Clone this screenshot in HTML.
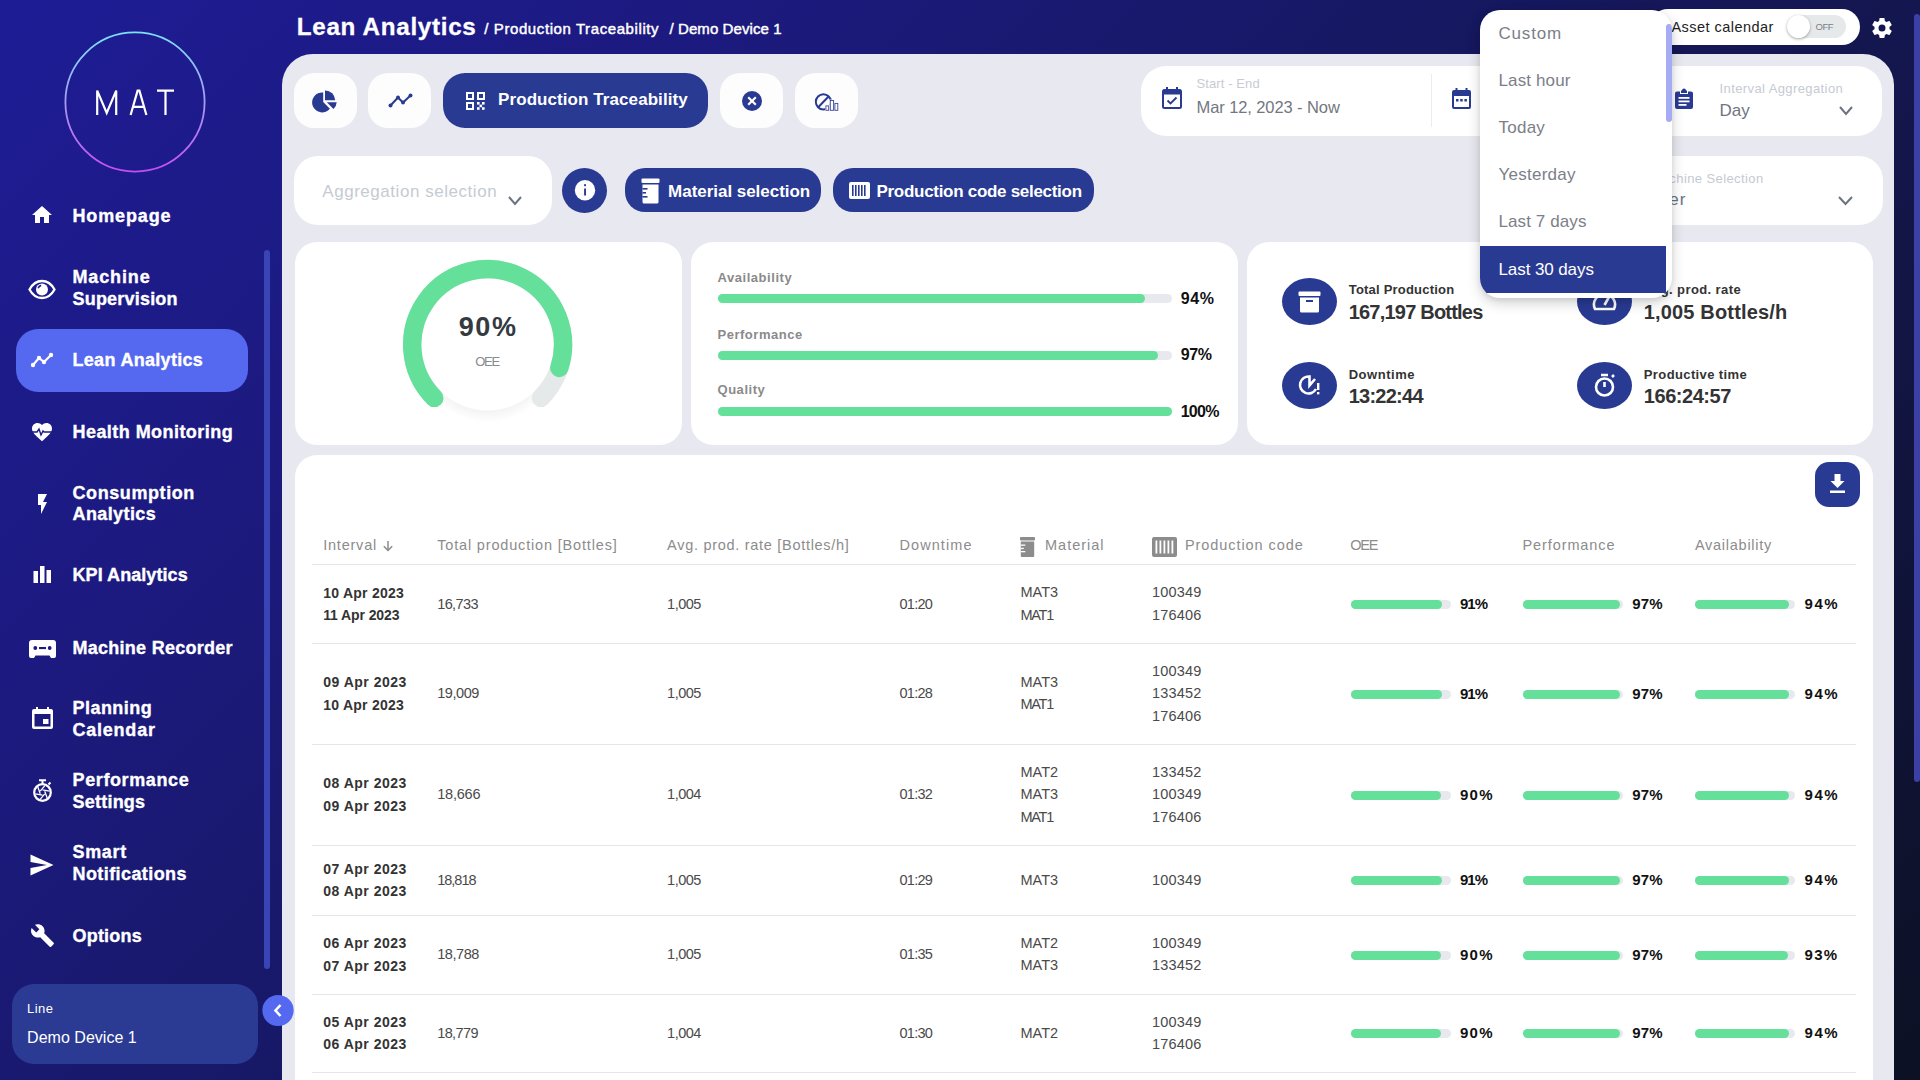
<!DOCTYPE html>
<html><head><meta charset="utf-8">
<style>
*{margin:0;padding:0;box-sizing:border-box}
html,body{width:1920px;height:1080px;overflow:hidden}
body{position:relative;font-family:"Liberation Sans",sans-serif;background:linear-gradient(135deg,#1e1c95 0%,#1c1a7e 25%,#161862 48%,#131544 74%,#0c1124 100%)}
.a{position:absolute}
.t{position:absolute;white-space:nowrap}
svg{position:absolute;overflow:visible}
</style></head><body>

<svg style="left:64px;top:31px" width="142" height="142" viewBox="0 0 142 142">
<defs><linearGradient id="lg" x1="0" y1="0" x2="0" y2="1"><stop offset="0" stop-color="#7fe0fa"/><stop offset="0.5" stop-color="#a79cf4"/><stop offset="1" stop-color="#c84cf2"/></linearGradient></defs>
<circle cx="71" cy="71" r="69.6" fill="none" stroke="url(#lg)" stroke-width="1.8"/>
</svg>
<svg style="left:0;top:0" width="282" height="200" viewBox="0 0 282 200">
<g fill="none" stroke="#fff" stroke-width="2.2" stroke-linejoin="miter">
<path d="M97.2,115 V90.6 L106.7,113 L116.2,90.6 V115"/>
<path d="M130.6,115 L137.6,90.6 H139.4 L146.4,115 M133.4,106.8 H143.6"/>
<path d="M157,90.6 H174 M165.5,90.6 V115"/>
</g></svg>
<div class="a" style="left:16px;top:329px;width:232px;height:63px;background:#5468f0;border-radius:22px;"></div>
<div class="t" id="t1" style="left:72.5px;top:206.9px;font-size:18px;line-height:18px;color:#fff;font-weight:bold;letter-spacing:0.857px;-webkit-text-stroke:0.35px #fff;">Homepage</div>
<div class="t" id="t2" style="left:72.5px;top:267.9px;font-size:18px;line-height:18px;color:#fff;font-weight:bold;letter-spacing:0.866px;-webkit-text-stroke:0.35px #fff;">Machine</div>
<div class="t" id="t3" style="left:72.5px;top:289.8px;font-size:18px;line-height:18px;color:#fff;font-weight:bold;letter-spacing:0.200px;-webkit-text-stroke:0.35px #fff;">Supervision</div>
<div class="t" id="t4" style="left:72.5px;top:350.7px;font-size:18px;line-height:18px;color:#fff;font-weight:bold;letter-spacing:0.308px;-webkit-text-stroke:0.35px #fff;">Lean Analytics</div>
<div class="t" id="t5" style="left:72.5px;top:422.6px;font-size:18px;line-height:18px;color:#fff;font-weight:bold;letter-spacing:0.448px;-webkit-text-stroke:0.35px #fff;">Health Monitoring</div>
<div class="t" id="t6" style="left:72.5px;top:483.5px;font-size:18px;line-height:18px;color:#fff;font-weight:bold;letter-spacing:0.580px;-webkit-text-stroke:0.35px #fff;">Consumption</div>
<div class="t" id="t7" style="left:72.5px;top:505.2px;font-size:18px;line-height:18px;color:#fff;font-weight:bold;letter-spacing:0.397px;-webkit-text-stroke:0.35px #fff;">Analytics</div>
<div class="t" id="t8" style="left:72.5px;top:566.3px;font-size:18px;line-height:18px;color:#fff;font-weight:bold;letter-spacing:0.066px;-webkit-text-stroke:0.35px #fff;">KPI Analytics</div>
<div class="t" id="t9" style="left:72.5px;top:638.5px;font-size:18px;line-height:18px;color:#fff;font-weight:bold;letter-spacing:0.267px;-webkit-text-stroke:0.35px #fff;">Machine Recorder</div>
<div class="t" id="t10" style="left:72.5px;top:699.4px;font-size:18px;line-height:18px;color:#fff;font-weight:bold;letter-spacing:0.457px;-webkit-text-stroke:0.35px #fff;">Planning</div>
<div class="t" id="t11" style="left:72.5px;top:721.1px;font-size:18px;line-height:18px;color:#fff;font-weight:bold;letter-spacing:0.770px;-webkit-text-stroke:0.35px #fff;">Calendar</div>
<div class="t" id="t12" style="left:72.5px;top:771.1px;font-size:18px;line-height:18px;color:#fff;font-weight:bold;letter-spacing:0.620px;-webkit-text-stroke:0.35px #fff;">Performance</div>
<div class="t" id="t13" style="left:72.5px;top:792.9px;font-size:18px;line-height:18px;color:#fff;font-weight:bold;letter-spacing:0.229px;-webkit-text-stroke:0.35px #fff;">Settings</div>
<div class="t" id="t14" style="left:72.5px;top:842.9px;font-size:18px;line-height:18px;color:#fff;font-weight:bold;letter-spacing:0.650px;-webkit-text-stroke:0.35px #fff;">Smart</div>
<div class="t" id="t15" style="left:72.5px;top:864.6px;font-size:18px;line-height:18px;color:#fff;font-weight:bold;letter-spacing:0.416px;-webkit-text-stroke:0.35px #fff;">Notifications</div>
<div class="t" id="t16" style="left:72.5px;top:926.7px;font-size:18px;line-height:18px;color:#fff;font-weight:bold;letter-spacing:0.200px;-webkit-text-stroke:0.35px #fff;">Options</div>
<svg style="left:30px;top:203px" width="24" height="24" viewBox="0 0 24 24"><path fill="#fff" d="M10,20V14H14V20H19V12H22L12,3L2,12H5V20H10Z"/></svg>
<svg style="left:28px;top:279px" width="28" height="21" viewBox="0 0 28 21"><path d="M1.5,10.5C4.5,5 9,2 14,2C19,2 23.5,5 26.5,10.5C23.5,16 19,19 14,19C9,19 4.5,16 1.5,10.5Z" fill="none" stroke="#fff" stroke-width="2.3"/><circle cx="14" cy="10.5" r="6" fill="#fff"/><path d="M10.2,9.3A4,4 0 0,1 13.2,6.4" fill="none" stroke="#1d1b8a" stroke-width="1.6"/></svg>
<svg style="left:30px;top:350px" width="24" height="18" viewBox="0 0 24 18"><polyline points="3,15 9,8 14,12 21,5" fill="none" stroke="#fff" stroke-width="2.2"/><g fill="#fff"><circle cx="3" cy="15" r="2.2"/><circle cx="9" cy="8" r="2.2"/><circle cx="14" cy="12" r="2.2"/><circle cx="21" cy="5" r="2.2"/></g></svg>
<svg style="left:30px;top:420px" width="24" height="24" viewBox="0 0 24 24"><path fill="#fff" d="M12,21.35L10.55,20.03C5.4,15.36 2,12.27 2,8.5C2,5.41 4.42,3 7.5,3C9.24,3 10.91,3.81 12,5.08C13.09,3.81 14.76,3 16.5,3C19.58,3 22,5.41 22,8.5C22,12.27 18.6,15.36 13.45,20.03L12,21.35Z"/><polyline points="1,12 7,12 9,9 11,15 13,11 14,12 23,12" fill="none" stroke="#1d1b88" stroke-width="1.4"/></svg>
<svg style="left:30px;top:492px" width="24" height="24" viewBox="0 0 24 24"><path fill="#fff" d="M8,2V13H11V22L17,10H13L17,2H8Z"/></svg>
<svg style="left:33px;top:566px" width="19" height="17" viewBox="0 0 19 17"><g fill="#fff"><rect x="0.5" y="5" width="4.5" height="12"/><rect x="7" y="0" width="4.5" height="17"/><rect x="13.5" y="4" width="4.5" height="13"/></g></svg>
<svg style="left:29px;top:640px" width="27" height="18" viewBox="0 0 27 18"><path fill="#fff" d="M3,0H24A3,3 0 0,1 27,3V16A2,2 0 0,1 25,18H22L20.5,15.5H6.5L5,18H2A2,2 0 0,1 0,16V3A3,3 0 0,1 3,0Z"/><g fill="#1c1a80"><circle cx="6.3" cy="8" r="1.9"/><circle cx="20.7" cy="8" r="1.9"/><rect x="10" y="7" width="7" height="2.1"/></g></svg>
<svg style="left:32px;top:707px" width="21" height="22" viewBox="0 0 21 22"><path fill="#fff" d="M4,0H6V2H15V0H17V2H19A2,2 0 0,1 21,4V20A2,2 0 0,1 19,22H2A2,2 0 0,1 0,20V4A2,2 0 0,1 2,2H4ZM2.5,7V19.5H18.5V7Z"/><rect fill="#fff" x="11" y="12" width="5.5" height="5"/></svg>
<svg style="left:32px;top:779px" width="22" height="23" viewBox="0 0 22 23"><g fill="none" stroke="#fff"><circle cx="10.5" cy="13.5" r="8.3" stroke-width="2.2"/><path d="M10.50,10.90L17.57,12.15M12.75,12.20L15.21,18.95M12.75,14.80L8.14,20.30M10.50,16.10L3.43,14.85M8.25,14.80L5.79,8.05M8.25,12.20L12.86,6.70" stroke-width="1.3"/><path d="M7,1.2H14M10.5,1.5V5M16.5,5.5L18.5,3.5" stroke-width="2"/></g></svg>
<svg style="left:30px;top:854px" width="24" height="22" viewBox="0 0 24 22"><path fill="#fff" d="M0.5,21.5L23.5,11L0.5,0.5V8L17,11L0.5,14Z"/></svg>
<svg style="left:30px;top:923px" width="25" height="25" viewBox="0 0 24 24"><path fill="#fff" d="M22.7,19L13.6,9.9C14.5,7.6 14,4.9 12.1,3C10.1,1 7.1,0.6 4.7,1.7L9,6L6,9L1.6,4.7C0.4,7.1 0.9,10.1 2.9,12.1C4.8,14 7.5,14.5 9.8,13.6L18.9,22.7C19.3,23.1 19.9,23.1 20.3,22.7L22.6,20.4C23.1,20 23.1,19.3 22.7,19Z"/></svg>
<div class="a" style="left:264px;top:250px;width:6px;height:719px;background:#3944b5;border-radius:3px;"></div>
<div class="a" style="left:12px;top:984px;width:246px;height:80px;background:#2b3a93;border-radius:22px;"></div>
<div class="t" id="t17" style="left:27.1px;top:1002.2px;font-size:13px;line-height:13px;color:#fff;font-weight:normal;letter-spacing:0.399px;">Line</div>
<div class="t" id="t18" style="left:27.1px;top:1029.6px;font-size:16px;line-height:16px;color:#fff;font-weight:normal;letter-spacing:0.018px;">Demo Device 1</div>
<div class="t" id="t19" style="left:296.8px;top:14.5px;font-size:24.2px;line-height:24.2px;color:#fff;font-weight:bold;letter-spacing:0.708px;-webkit-text-stroke:0.3px #fff;">Lean Analytics</div>
<div class="t" id="t20" style="left:484.3px;top:20.5px;font-size:15px;line-height:15px;color:#fff;font-weight:normal;letter-spacing:0.591px;-webkit-text-stroke:0.45px #fff;">/ Production Traceability</div>
<div class="t" id="t21" style="left:669.5px;top:20.5px;font-size:15px;line-height:15px;color:#fff;font-weight:normal;letter-spacing:0.087px;-webkit-text-stroke:0.45px #fff;">/ Demo Device 1</div>
<div class="a" style="left:1650px;top:9px;width:210px;height:36px;background:#fff;border-radius:18px;"></div>
<div class="t" id="t22" style="left:1671.5px;top:19.9px;font-size:14.5px;line-height:14.5px;color:#222;font-weight:normal;letter-spacing:0.45px">Asset calendar</div>
<div class="a" style="left:1787px;top:15px;width:59px;height:23px;background:#e6e9ea;border-radius:12px;"></div>
<div class="a" style="left:1787px;top:15px;width:23px;height:23px;background:#fff;border-radius:50%;box-shadow:0 1px 3px rgba(0,0,0,.35);"></div>
<div class="t" id="t23" style="left:1815.5px;top:22.2px;font-size:9.5px;line-height:9.5px;color:#7a7f85;font-weight:normal;letter-spacing:-0.500px;">OFF</div>
<svg style="left:1870px;top:16px" width="24" height="24" viewBox="0 0 24 24"><path fill="#fff" d="M12,15.5A3.5,3.5 0 0,1 8.5,12A3.5,3.5 0 0,1 12,8.5A3.5,3.5 0 0,1 15.5,12A3.5,3.5 0 0,1 12,15.5M19.43,12.97C19.47,12.65 19.5,12.33 19.5,12C19.5,11.67 19.47,11.34 19.43,11L21.54,9.37C21.73,9.22 21.78,8.95 21.66,8.73L19.66,5.27C19.54,5.05 19.27,4.96 19.05,5.05L16.56,6.05C16.04,5.66 15.5,5.32 14.87,5.07L14.5,2.42C14.46,2.18 14.25,2 14,2H10C9.75,2 9.54,2.18 9.5,2.42L9.13,5.07C8.5,5.32 7.96,5.66 7.44,6.05L4.95,5.05C4.73,4.96 4.46,5.05 4.34,5.27L2.34,8.73C2.21,8.95 2.27,9.22 2.46,9.370L4.57,11C4.53,11.34 4.5,11.67 4.5,12C4.5,12.33 4.53,12.65 4.57,12.97L2.46,14.63C2.27,14.78 2.21,15.05 2.34,15.27L4.34,18.73C4.46,18.95 4.73,19.03 4.95,18.95L7.44,17.94C7.96,18.34 8.5,18.68 9.130,18.93L9.5,21.58C9.54,21.82 9.75,22 10,22H14C14.25,22 14.46,21.82 14.5,21.58L14.87,18.93C15.5,18.67 16.04,18.34 16.56,17.94L19.05,18.95C19.27,19.03 19.54,18.95 19.66,18.73L21.66,15.27C21.78,15.05 21.73,14.78 21.54,14.63L19.43,12.97Z"/></svg>
<div class="a" style="left:1914px;top:14px;width:6px;height:768px;background:#3a40a6;border-radius:3px;"></div>
<div class="a" style="left:282px;top:54px;width:1612px;height:1100px;background:#e8e8f0;border-radius:31px 31px 0 0;"></div>
<div class="a" style="left:294px;top:73px;width:63px;height:55px;background:#fdfdfe;border-radius:20px;"></div>
<div class="a" style="left:368px;top:73px;width:63px;height:55px;background:#fdfdfe;border-radius:20px;"></div>
<div class="a" style="left:720px;top:73px;width:63px;height:55px;background:#fdfdfe;border-radius:20px;"></div>
<div class="a" style="left:795px;top:73px;width:63px;height:55px;background:#fdfdfe;border-radius:20px;"></div>
<div class="a" style="left:443px;top:73px;width:265px;height:55px;background:#293a92;border-radius:22px;"></div>
<svg style="left:313px;top:89px" width="25" height="24" viewBox="0 0 25 24"><g fill="#293a92"><path d="M10.2,3.5V13L16.9,19.7A10,10 0 1,1 10.2,3.5Z"/><path d="M12,1.5A10,10 0 0,1 22.2,11.3H12Z"/><path d="M13.8,13.3H23.7A10,10 0 0,1 20.5,20Z"/></g></svg>
<svg style="left:388px;top:93px" width="25" height="15" viewBox="0 0 25 15"><polyline points="2.5,12.5 10,4.5 15,9.5 22.5,2.5" fill="none" stroke="#293a92" stroke-width="2"/><g fill="#293a92"><circle cx="2.5" cy="12.5" r="2"/><circle cx="10" cy="4.5" r="2"/><circle cx="15" cy="9.5" r="2"/><circle cx="22.5" cy="2.5" r="2"/></g></svg>
<svg style="left:466px;top:92px" width="19" height="18" viewBox="0 0 19 18"><g fill="none" stroke="#fff" stroke-width="2"><rect x="1" y="1" width="6" height="6"/><rect x="12" y="1" width="6" height="6"/><rect x="1" y="11" width="6" height="6"/></g><g fill="#fff"><rect x="11" y="10" width="2.6" height="2.6"/><rect x="16" y="10" width="2.6" height="2.6"/><rect x="13.5" y="12.6" width="2.6" height="2.6"/><rect x="11" y="15.2" width="2.6" height="2.6"/><rect x="16" y="15.2" width="2.6" height="2.6"/></g></svg>
<div class="t" id="t24" style="left:498.1px;top:91.3px;font-size:17px;line-height:17px;color:#fff;font-weight:bold;letter-spacing:0.073px;">Production Traceability</div>
<svg style="left:742px;top:91px" width="20" height="20" viewBox="0 0 20 20"><circle cx="10" cy="10" r="10" fill="#293a92"/><path d="M6.2,6.2L13.8,13.8M13.8,6.2L6.2,13.8" stroke="#fff" stroke-width="2.2"/></svg>
<svg style="left:815px;top:92px" width="24" height="19" viewBox="0 0 24 19"><g fill="none" stroke="#293a92" stroke-width="2"><circle cx="8.4" cy="9.8" r="7.6"/><path d="M3.2,15.2L13.8,4.2"/></g><path d="M10,13H14.4V7.6H19.6V10.6H23.6V19H10Z" fill="#fdfdfe"/><g fill="none" stroke="#3a4698" stroke-width="0.9"><rect x="10.9" y="13.9" width="2.8" height="4.4"/><rect x="15.3" y="8.5" width="3.3" height="9.8"/><rect x="19.9" y="11.4" width="2.9" height="6.9"/></g></svg>
<div class="a" style="left:1141px;top:66px;width:741px;height:70px;background:#fff;border-radius:25px;"></div>
<div class="a" style="left:1431px;top:74px;width:1px;height:53px;background:#ececf0;border-radius:0;"></div>
<svg style="left:1162px;top:87px" width="20" height="22" viewBox="0 0 20 22"><path fill="#293a92" d="M4,0H6V2H14V0H16V2H17.5A2.5,2.5 0 0,1 20,4.5V19.5A2.5,2.5 0 0,1 17.5,22H2.5A2.5,2.5 0 0,1 0,19.5V4.5A2.5,2.5 0 0,1 2.5,2H4ZM2,7.5V20H18V7.5Z"/><polyline points="5.5,13.5 8.5,16.5 14.5,10.5" fill="none" stroke="#293a92" stroke-width="1.8"/></svg>
<div class="t" id="t25" style="left:1196.5px;top:77.4px;font-size:13px;line-height:13px;color:#c8ccd2;font-weight:normal;letter-spacing:0.100px;">Start - End</div>
<div class="t" id="t26" style="left:1196.5px;top:99.1px;font-size:16.5px;line-height:16.5px;color:#737780;font-weight:normal;letter-spacing:-0.092px;">Mar 12, 2023 - Now</div>
<svg style="left:1452px;top:88px" width="19" height="21" viewBox="0 0 19 21"><path fill="#293a92" d="M3.5,0H5.5V2H13.5V0H15.5V2H17A2,2 0 0,1 19,4V19A2,2 0 0,1 17,21H2A2,2 0 0,1 0,19V4A2,2 0 0,1 2,2H3.5ZM2,8V19H17V8Z"/><g fill="#293a92"><rect x="4" y="11" width="2.5" height="2.5"/><rect x="8.2" y="11" width="2.5" height="2.5"/><rect x="12.4" y="11" width="2.5" height="2.5"/></g></svg>
<svg style="left:1675px;top:88px" width="18" height="21" viewBox="0 0 18 21"><path fill="#293a92" d="M6,2.5H7A2,2 0 0,1 11,2.5H12V5H6ZM2,3.5H5V6H13V3.5H16A2,2 0 0,1 18,5.5V19A2,2 0 0,1 16,21H2A2,2 0 0,1 0,19V5.5A2,2 0 0,1 2,3.5Z"/><g fill="#fff"><rect x="3.5" y="9" width="11" height="1.8"/><rect x="3.5" y="12.5" width="11" height="1.8"/><rect x="3.5" y="16" width="8" height="1.8"/></g></svg>
<div class="t" id="t27" style="left:1719.5px;top:82.0px;font-size:13px;line-height:13px;color:#c5cad3;font-weight:normal;letter-spacing:0.401px;">Interval Aggregation</div>
<div class="t" id="t28" style="left:1719.5px;top:102.1px;font-size:17px;line-height:17px;color:#707580;font-weight:normal;">Day</div>
<svg style="left:1838.5px;top:106px" width="14" height="9" viewBox="0 0 14 9"><polyline points="1,1 7.0,8 13,1" fill="none" stroke="#6b7280" stroke-width="2"/></svg>
<div class="a" style="left:294px;top:156px;width:258px;height:69px;background:#fff;border-radius:24px;"></div>
<div class="t" id="t29" style="left:322.3px;top:183.0px;font-size:17px;line-height:17px;color:#c5cbd2;font-weight:normal;letter-spacing:0.540px;">Aggregation selection</div>
<svg style="left:508px;top:196px" width="14" height="9" viewBox="0 0 14 9"><polyline points="1,1 7.0,8 13,1" fill="none" stroke="#6b7280" stroke-width="2"/></svg>
<svg style="left:562px;top:168px" width="45" height="45" viewBox="0 0 45 45"><circle cx="22.5" cy="22.5" r="22.5" fill="#293a92"/><circle cx="23" cy="22.3" r="10.2" fill="#fff"/><rect x="22.1" y="20.5" width="1.9" height="7" fill="#293a92"/><rect x="22.1" y="16.2" width="1.9" height="2" fill="#293a92"/></svg>
<div class="a" style="left:625px;top:168px;width:196px;height:44px;background:#293a92;border-radius:20px;"></div>
<div class="a" style="left:833px;top:168px;width:261px;height:44px;background:#293a92;border-radius:20px;"></div>
<svg style="left:641px;top:178px" width="19" height="26" viewBox="0 0 19 26"><g fill="#fff"><rect x="0.5" y="0.5" width="18" height="4.5" rx="1"/><path d="M1.5,6.5H17.5V24A1.5,1.5 0 0,1 16,25.5H3A1.5,1.5 0 0,1 1.5,24Z"/></g><g fill="#293a92"><rect x="1.5" y="10" width="5" height="1.6"/><rect x="1.5" y="14" width="3.5" height="1.6"/><rect x="1.5" y="18" width="5" height="1.6"/></g></svg>
<div class="t" id="t30" style="left:668.1px;top:182.5px;font-size:17px;line-height:17px;color:#fff;font-weight:bold;letter-spacing:-0.033px;">Material selection</div>
<svg style="left:849px;top:182px" width="21" height="17" viewBox="0 0 21 17"><rect width="21" height="17" rx="2" fill="#fff"/><g fill="#293a92"><rect x="3" y="3" width="1.6" height="11"/><rect x="6" y="3" width="1.6" height="11"/><rect x="9" y="3" width="1.6" height="11"/><rect x="12" y="3" width="1.6" height="11"/><rect x="15" y="3" width="1.6" height="11"/></g></svg>
<div class="t" id="t31" style="left:876.5px;top:182.5px;font-size:17px;line-height:17px;color:#fff;font-weight:bold;letter-spacing:-0.292px;">Production code selection</div>
<div class="a" style="left:1560px;top:156px;width:323px;height:69px;background:#fff;border-radius:24px;"></div>
<div class="t" id="t32" style="left:1650.5px;top:172.3px;font-size:13px;line-height:13px;color:#c5cad3;font-weight:normal;letter-spacing:0.4px">Machine Selection</div>
<div class="t" id="t33" style="left:1643.5px;top:190.6px;font-size:17px;line-height:17px;color:#6b7280;font-weight:normal;letter-spacing:1px">Filler</div>
<svg style="left:1838px;top:196px" width="15" height="9" viewBox="0 0 15 9"><polyline points="1,1 7.5,8 14,1" fill="none" stroke="#6b7280" stroke-width="2"/></svg>
<div class="a" style="left:295px;top:242px;width:387px;height:203px;background:#fff;border-radius:22px;"></div>
<div class="a" style="left:691px;top:242px;width:547px;height:203px;background:#fff;border-radius:22px;"></div>
<div class="a" style="left:1247px;top:242px;width:626px;height:203px;background:#fff;border-radius:22px;"></div>
<svg style="left:295px;top:242px" width="387" height="203" viewBox="0 0 387 203">
<defs><radialGradient id="sh" cx="0.5" cy="0.5" r="0.5"><stop offset="0.82" stop-color="#000" stop-opacity="0.05"/><stop offset="1" stop-color="#000" stop-opacity="0"/></radialGradient></defs>
<circle cx="192.60000000000002" cy="108.60000000000002" r="72" fill="url(#sh)"/>
<circle cx="192.60000000000002" cy="102.60000000000002" r="66" fill="#fff"/>
<path d="M139.28,155.92 A75.4,75.4 0 1 1 245.92,155.92" fill="none" stroke="#e6e9ea" stroke-width="18.4" stroke-linecap="round"/>
<path d="M139.28,155.92 A75.4,75.4 0 1 1 264.31,125.90" fill="none" stroke="#64e09b" stroke-width="18.4" stroke-linecap="round"/>
</svg>
<div class="t" id="t34" style="left:458.7px;top:313.6px;font-size:27px;line-height:27px;color:#343a40;font-weight:bold;letter-spacing:1.600px;">90%</div>
<div class="t" id="t35" style="left:475.3px;top:355.0px;font-size:13px;line-height:13px;color:#868b91;font-weight:normal;letter-spacing:-1.300px;">OEE</div>
<div class="t" id="t36" style="left:717.5px;top:271.2px;font-size:13px;line-height:13px;color:#8a8a8a;font-weight:bold;letter-spacing:0.545px;">Availability</div>
<div class="a" style="left:718px;top:294px;width:454px;height:9px;background:#e8e9ee;border-radius:5px;"></div>
<div class="a" style="left:718px;top:294px;width:427px;height:9px;background:#64e09b;border-radius:5px;"></div>
<div class="t" id="t37" style="left:1180.7px;top:290.6px;font-size:16px;line-height:16px;color:#111;font-weight:bold;letter-spacing:0.600px;">94%</div>
<div class="t" id="t38" style="left:717.5px;top:327.5px;font-size:13px;line-height:13px;color:#8a8a8a;font-weight:bold;letter-spacing:0.520px;">Performance</div>
<div class="a" style="left:718px;top:351px;width:454px;height:9px;background:#e8e9ee;border-radius:5px;"></div>
<div class="a" style="left:718px;top:351px;width:440px;height:9px;background:#64e09b;border-radius:5px;"></div>
<div class="t" id="t39" style="left:1180.7px;top:346.9px;font-size:16px;line-height:16px;color:#111;font-weight:bold;letter-spacing:-0.400px;">97%</div>
<div class="t" id="t40" style="left:717.5px;top:382.9px;font-size:13px;line-height:13px;color:#8a8a8a;font-weight:bold;letter-spacing:0.532px;">Quality</div>
<div class="a" style="left:718px;top:407px;width:454px;height:9px;background:#e8e9ee;border-radius:5px;"></div>
<div class="a" style="left:718px;top:407px;width:454px;height:9px;background:#64e09b;border-radius:5px;"></div>
<div class="t" id="t41" style="left:1180.7px;top:403.7px;font-size:16px;line-height:16px;color:#111;font-weight:bold;letter-spacing:-0.734px;">100%</div>
<svg style="left:1282px;top:278px" width="55" height="47" viewBox="0 0 55 47"><ellipse cx="27.5" cy="23.5" rx="27.5" ry="23.5" fill="#293a92"/><g fill="#fff"><rect x="16.5" y="13.5" width="22" height="4.5" rx="1"/><path d="M18,19.5H37V33A1.5,1.5 0 0,1 35.5,34.5H19.5A1.5,1.5 0 0,1 18,33Z"/></g><rect x="24" y="22" width="7" height="2" fill="#293a92"/></svg>
<svg style="left:1577px;top:278px" width="55" height="47" viewBox="0 0 55 47"><ellipse cx="27.5" cy="23.5" rx="27.5" ry="23.5" fill="#293a92"/><g fill="none" stroke="#fff" stroke-width="2.6"><path d="M18,31A10.5,10.5 0 1,1 37,31Z"/><path d="M27.5,27L32,19"/></g></svg>
<svg style="left:1282px;top:362px" width="55" height="47" viewBox="0 0 55 47"><ellipse cx="27.5" cy="23.5" rx="27.5" ry="23.5" fill="#293a92"/><g fill="none" stroke="#fff" stroke-width="2.6"><path d="M34,27A8.5,8.5 0 1,1 27.5,14.5V23.5L33,17"/></g><rect x="35" y="21" width="2.4" height="7" fill="#fff"/><rect x="35" y="30" width="2.4" height="2.4" fill="#fff"/></svg>
<svg style="left:1577px;top:362px" width="55" height="47" viewBox="0 0 55 47"><ellipse cx="27.5" cy="23.5" rx="27.5" ry="23.5" fill="#293a92"/><g fill="none" stroke="#fff" stroke-width="2.6"><circle cx="27.5" cy="25" r="8.5"/><path d="M24,13H31M27.5,20V25M35,15L37,13"/></g></svg>
<div class="t" id="t42" style="left:1348.7px;top:283.3px;font-size:13px;line-height:13px;color:#333;font-weight:bold;letter-spacing:0.212px;">Total Production</div>
<div class="t" id="t43" style="left:1348.7px;top:302.0px;font-size:20px;line-height:20px;color:#333;font-weight:bold;letter-spacing:-0.786px;">167,197 Bottles</div>
<div class="t" id="t44" style="left:1643.8px;top:283.3px;font-size:13px;line-height:13px;color:#333;font-weight:bold;letter-spacing:0.4px">Avg. prod. rate</div>
<div class="t" id="t45" style="left:1643.8px;top:302.0px;font-size:20px;line-height:20px;color:#333;font-weight:bold;letter-spacing:0.159px;">1,005 Bottles/h</div>
<div class="t" id="t46" style="left:1348.7px;top:368.0px;font-size:13px;line-height:13px;color:#333;font-weight:bold;letter-spacing:0.541px;">Downtime</div>
<div class="t" id="t47" style="left:1348.7px;top:385.7px;font-size:20px;line-height:20px;color:#333;font-weight:bold;letter-spacing:-0.745px;">13:22:44</div>
<div class="t" id="t48" style="left:1643.8px;top:368.0px;font-size:13px;line-height:13px;color:#333;font-weight:bold;letter-spacing:0.387px;">Productive time</div>
<div class="t" id="t49" style="left:1643.8px;top:385.7px;font-size:20px;line-height:20px;color:#333;font-weight:bold;letter-spacing:-0.450px;">166:24:57</div>
<div class="a" style="left:295px;top:455px;width:1578px;height:700px;background:#fff;border-radius:22px;"></div>
<svg style="left:1815px;top:462px" width="45" height="45" viewBox="0 0 45 45"><rect width="45" height="45" rx="14" fill="#293a92"/><path fill="#fff" d="M15,28.5H30V31H15ZM19.5,12H25.5V19H29.5L22.5,26L15.5,19H19.5Z"/></svg>
<div class="t" id="t50" style="left:323.2px;top:538.2px;font-size:14.5px;line-height:14.5px;color:#8c8c8c;font-weight:normal;letter-spacing:0.784px;">Interval</div>
<svg style="left:382px;top:540px" width="12" height="12" viewBox="0 0 12 12"><path d="M6,1V10.5M1.8,6.3L6,10.5L10.2,6.3" fill="none" stroke="#8c8c8c" stroke-width="1.5"/></svg>
<div class="t" id="t51" style="left:437.2px;top:538.2px;font-size:14.5px;line-height:14.5px;color:#8c8c8c;font-weight:normal;letter-spacing:0.832px;">Total production [Bottles]</div>
<div class="t" id="t52" style="left:667.1px;top:538.2px;font-size:14.5px;line-height:14.5px;color:#8c8c8c;font-weight:normal;letter-spacing:0.707px;">Avg. prod. rate [Bottles/h]</div>
<div class="t" id="t53" style="left:899.5px;top:538.2px;font-size:14.5px;line-height:14.5px;color:#8c8c8c;font-weight:normal;letter-spacing:1.073px;">Downtime</div>
<svg style="left:1020px;top:537px" width="15" height="20" viewBox="0 0 15 20"><g fill="#8c8c8c"><rect x="0" y="0" width="15" height="3.4" rx="0.8"/><path d="M0.8,4.6H14.2V19A1,1 0 0,1 13.2,20H1.8A1,1 0 0,1 0.8,19Z"/></g><g fill="#fff"><rect x="0.8" y="7.5" width="4.5" height="1.3"/><rect x="0.8" y="10.8" width="3" height="1.3"/><rect x="0.8" y="14" width="4.5" height="1.3"/></g></svg>
<div class="t" id="t54" style="left:1045.0px;top:538.2px;font-size:14.5px;line-height:14.5px;color:#8c8c8c;font-weight:normal;letter-spacing:1.000px;">Material</div>
<svg style="left:1152px;top:537px" width="25" height="20" viewBox="0 0 25 20"><rect width="25" height="20" rx="2" fill="#8c8c8c"/><g fill="#fff"><rect x="3.5" y="3.5" width="1.8" height="13"/><rect x="7.5" y="3.5" width="1.8" height="13"/><rect x="11.5" y="3.5" width="1.8" height="13"/><rect x="15.5" y="3.5" width="1.8" height="13"/><rect x="19.5" y="3.5" width="1.8" height="13"/></g></svg>
<div class="t" id="t55" style="left:1185.0px;top:538.2px;font-size:14.5px;line-height:14.5px;color:#8c8c8c;font-weight:normal;letter-spacing:0.929px;">Production code</div>
<div class="t" id="t56" style="left:1350.3px;top:538.2px;font-size:14.5px;line-height:14.5px;color:#8c8c8c;font-weight:normal;letter-spacing:-1.300px;">OEE</div>
<div class="t" id="t57" style="left:1522.5px;top:538.2px;font-size:14.5px;line-height:14.5px;color:#8c8c8c;font-weight:normal;letter-spacing:0.900px;">Performance</div>
<div class="t" id="t58" style="left:1694.9px;top:538.2px;font-size:14.5px;line-height:14.5px;color:#8c8c8c;font-weight:normal;letter-spacing:0.744px;">Availability</div>
<div class="a" style="left:312px;top:564px;width:1544px;height:1px;background:#e6e6ea;border-radius:0;"></div>
<div class="t" id="t59" style="left:323.2px;top:585.7px;font-size:14px;line-height:14px;color:#333;font-weight:bold;letter-spacing:0.250px;">10 Apr 2023</div>
<div class="t" id="t60" style="left:323.2px;top:608.1px;font-size:14px;line-height:14px;color:#333;font-weight:bold;letter-spacing:-0.100px;">11 Apr 2023</div>
<div class="t" id="t61" style="left:437.2px;top:596.5px;font-size:14.5px;line-height:14.5px;color:#4a4a4a;font-weight:normal;letter-spacing:-0.600px;">16,733</div>
<div class="t" id="t62" style="left:667.1px;top:596.5px;font-size:14.5px;line-height:14.5px;color:#4a4a4a;font-weight:normal;letter-spacing:-0.500px;">1,005</div>
<div class="t" id="t63" style="left:899.5px;top:596.5px;font-size:14.5px;line-height:14.5px;color:#4a4a4a;font-weight:normal;letter-spacing:-0.750px;">01:20</div>
<div class="t" id="t64" style="left:1020.5px;top:585.3px;font-size:14.5px;line-height:14.5px;color:#4a4a4a;font-weight:normal;">MAT3</div>
<div class="t" id="t65" style="left:1020.5px;top:607.7px;font-size:14.5px;line-height:14.5px;color:#4a4a4a;font-weight:normal;letter-spacing:-1.300px;">MAT1</div>
<div class="t" id="t66" style="left:1152.0px;top:585.3px;font-size:14.5px;line-height:14.5px;color:#4a4a4a;font-weight:normal;letter-spacing:0.200px;">100349</div>
<div class="t" id="t67" style="left:1152.0px;top:607.7px;font-size:14.5px;line-height:14.5px;color:#4a4a4a;font-weight:normal;letter-spacing:0.200px;">176406</div>
<div class="a" style="left:1350.8px;top:600.0px;width:100px;height:9px;background:#e8e9ee;border-radius:5px;"></div>
<div class="a" style="left:1350.8px;top:600.0px;width:91px;height:9px;background:#64e09b;border-radius:5px;"></div>
<div class="t" id="t68" style="left:1460.0px;top:596.1px;font-size:15px;line-height:15px;color:#111;font-weight:bold;letter-spacing:-1.000px;">91%</div>
<div class="a" style="left:1523px;top:600.0px;width:100px;height:9px;background:#e8e9ee;border-radius:5px;"></div>
<div class="a" style="left:1523px;top:600.0px;width:97px;height:9px;background:#64e09b;border-radius:5px;"></div>
<div class="t" id="t69" style="left:1632.2px;top:596.1px;font-size:15px;line-height:15px;color:#111;font-weight:bold;letter-spacing:0.250px;">97%</div>
<div class="a" style="left:1695.4px;top:600.0px;width:100px;height:9px;background:#e8e9ee;border-radius:5px;"></div>
<div class="a" style="left:1695.4px;top:600.0px;width:94px;height:9px;background:#64e09b;border-radius:5px;"></div>
<div class="t" id="t70" style="left:1804.6px;top:596.1px;font-size:15px;line-height:15px;color:#111;font-weight:bold;letter-spacing:1.500px;">94%</div>
<div class="a" style="left:312px;top:643px;width:1544px;height:1px;background:#e6e6ea;border-radius:0;"></div>
<div class="t" id="t71" style="left:323.2px;top:675.4px;font-size:14px;line-height:14px;color:#333;font-weight:bold;letter-spacing:0.500px;">09 Apr 2023</div>
<div class="t" id="t72" style="left:323.2px;top:697.8px;font-size:14px;line-height:14px;color:#333;font-weight:bold;letter-spacing:0.250px;">10 Apr 2023</div>
<div class="t" id="t73" style="left:437.2px;top:686.2px;font-size:14.5px;line-height:14.5px;color:#4a4a4a;font-weight:normal;letter-spacing:-0.440px;">19,009</div>
<div class="t" id="t74" style="left:667.1px;top:686.2px;font-size:14.5px;line-height:14.5px;color:#4a4a4a;font-weight:normal;letter-spacing:-0.500px;">1,005</div>
<div class="t" id="t75" style="left:899.5px;top:686.2px;font-size:14.5px;line-height:14.5px;color:#4a4a4a;font-weight:normal;letter-spacing:-0.750px;">01:28</div>
<div class="t" id="t76" style="left:1020.5px;top:675.0px;font-size:14.5px;line-height:14.5px;color:#4a4a4a;font-weight:normal;">MAT3</div>
<div class="t" id="t77" style="left:1020.5px;top:697.4px;font-size:14.5px;line-height:14.5px;color:#4a4a4a;font-weight:normal;letter-spacing:-1.300px;">MAT1</div>
<div class="t" id="t78" style="left:1152.0px;top:663.8px;font-size:14.5px;line-height:14.5px;color:#4a4a4a;font-weight:normal;letter-spacing:0.200px;">100349</div>
<div class="t" id="t79" style="left:1152.0px;top:686.2px;font-size:14.5px;line-height:14.5px;color:#4a4a4a;font-weight:normal;letter-spacing:0.200px;">133452</div>
<div class="t" id="t80" style="left:1152.0px;top:708.6px;font-size:14.5px;line-height:14.5px;color:#4a4a4a;font-weight:normal;letter-spacing:0.200px;">176406</div>
<div class="a" style="left:1350.8px;top:689.75px;width:100px;height:9px;background:#e8e9ee;border-radius:5px;"></div>
<div class="a" style="left:1350.8px;top:689.75px;width:91px;height:9px;background:#64e09b;border-radius:5px;"></div>
<div class="t" id="t81" style="left:1460.0px;top:685.8px;font-size:15px;line-height:15px;color:#111;font-weight:bold;letter-spacing:-1.000px;">91%</div>
<div class="a" style="left:1523px;top:689.75px;width:100px;height:9px;background:#e8e9ee;border-radius:5px;"></div>
<div class="a" style="left:1523px;top:689.75px;width:97px;height:9px;background:#64e09b;border-radius:5px;"></div>
<div class="t" id="t82" style="left:1632.2px;top:685.8px;font-size:15px;line-height:15px;color:#111;font-weight:bold;letter-spacing:0.250px;">97%</div>
<div class="a" style="left:1695.4px;top:689.75px;width:100px;height:9px;background:#e8e9ee;border-radius:5px;"></div>
<div class="a" style="left:1695.4px;top:689.75px;width:94px;height:9px;background:#64e09b;border-radius:5px;"></div>
<div class="t" id="t83" style="left:1804.6px;top:685.8px;font-size:15px;line-height:15px;color:#111;font-weight:bold;letter-spacing:1.500px;">94%</div>
<div class="a" style="left:312px;top:744px;width:1544px;height:1px;background:#e6e6ea;border-radius:0;"></div>
<div class="t" id="t84" style="left:323.2px;top:776.4px;font-size:14px;line-height:14px;color:#333;font-weight:bold;letter-spacing:0.500px;">08 Apr 2023</div>
<div class="t" id="t85" style="left:323.2px;top:798.8px;font-size:14px;line-height:14px;color:#333;font-weight:bold;letter-spacing:0.500px;">09 Apr 2023</div>
<div class="t" id="t86" style="left:437.2px;top:787.2px;font-size:14.5px;line-height:14.5px;color:#4a4a4a;font-weight:normal;letter-spacing:-0.200px;">18,666</div>
<div class="t" id="t87" style="left:667.1px;top:787.2px;font-size:14.5px;line-height:14.5px;color:#4a4a4a;font-weight:normal;letter-spacing:-0.500px;">1,004</div>
<div class="t" id="t88" style="left:899.5px;top:787.2px;font-size:14.5px;line-height:14.5px;color:#4a4a4a;font-weight:normal;letter-spacing:-0.750px;">01:32</div>
<div class="t" id="t89" style="left:1020.5px;top:764.8px;font-size:14.5px;line-height:14.5px;color:#4a4a4a;font-weight:normal;">MAT2</div>
<div class="t" id="t90" style="left:1020.5px;top:787.2px;font-size:14.5px;line-height:14.5px;color:#4a4a4a;font-weight:normal;">MAT3</div>
<div class="t" id="t91" style="left:1020.5px;top:809.6px;font-size:14.5px;line-height:14.5px;color:#4a4a4a;font-weight:normal;letter-spacing:-1.300px;">MAT1</div>
<div class="t" id="t92" style="left:1152.0px;top:764.8px;font-size:14.5px;line-height:14.5px;color:#4a4a4a;font-weight:normal;letter-spacing:0.200px;">133452</div>
<div class="t" id="t93" style="left:1152.0px;top:787.2px;font-size:14.5px;line-height:14.5px;color:#4a4a4a;font-weight:normal;letter-spacing:0.200px;">100349</div>
<div class="t" id="t94" style="left:1152.0px;top:809.6px;font-size:14.5px;line-height:14.5px;color:#4a4a4a;font-weight:normal;letter-spacing:0.200px;">176406</div>
<div class="a" style="left:1350.8px;top:790.75px;width:100px;height:9px;background:#e8e9ee;border-radius:5px;"></div>
<div class="a" style="left:1350.8px;top:790.75px;width:90px;height:9px;background:#64e09b;border-radius:5px;"></div>
<div class="t" id="t95" style="left:1460.0px;top:786.8px;font-size:15px;line-height:15px;color:#111;font-weight:bold;letter-spacing:1.250px;">90%</div>
<div class="a" style="left:1523px;top:790.75px;width:100px;height:9px;background:#e8e9ee;border-radius:5px;"></div>
<div class="a" style="left:1523px;top:790.75px;width:97px;height:9px;background:#64e09b;border-radius:5px;"></div>
<div class="t" id="t96" style="left:1632.2px;top:786.8px;font-size:15px;line-height:15px;color:#111;font-weight:bold;letter-spacing:0.250px;">97%</div>
<div class="a" style="left:1695.4px;top:790.75px;width:100px;height:9px;background:#e8e9ee;border-radius:5px;"></div>
<div class="a" style="left:1695.4px;top:790.75px;width:94px;height:9px;background:#64e09b;border-radius:5px;"></div>
<div class="t" id="t97" style="left:1804.6px;top:786.8px;font-size:15px;line-height:15px;color:#111;font-weight:bold;letter-spacing:1.500px;">94%</div>
<div class="a" style="left:312px;top:845px;width:1544px;height:1px;background:#e6e6ea;border-radius:0;"></div>
<div class="t" id="t98" style="left:323.2px;top:861.9px;font-size:14px;line-height:14px;color:#333;font-weight:bold;letter-spacing:0.500px;">07 Apr 2023</div>
<div class="t" id="t99" style="left:323.2px;top:884.3px;font-size:14px;line-height:14px;color:#333;font-weight:bold;letter-spacing:0.500px;">08 Apr 2023</div>
<div class="t" id="t100" style="left:437.2px;top:872.7px;font-size:14.5px;line-height:14.5px;color:#4a4a4a;font-weight:normal;letter-spacing:-1.000px;">18,818</div>
<div class="t" id="t101" style="left:667.1px;top:872.7px;font-size:14.5px;line-height:14.5px;color:#4a4a4a;font-weight:normal;letter-spacing:-0.500px;">1,005</div>
<div class="t" id="t102" style="left:899.5px;top:872.7px;font-size:14.5px;line-height:14.5px;color:#4a4a4a;font-weight:normal;letter-spacing:-0.750px;">01:29</div>
<div class="t" id="t103" style="left:1020.5px;top:872.7px;font-size:14.5px;line-height:14.5px;color:#4a4a4a;font-weight:normal;">MAT3</div>
<div class="t" id="t104" style="left:1152.0px;top:872.7px;font-size:14.5px;line-height:14.5px;color:#4a4a4a;font-weight:normal;letter-spacing:0.200px;">100349</div>
<div class="a" style="left:1350.8px;top:876.25px;width:100px;height:9px;background:#e8e9ee;border-radius:5px;"></div>
<div class="a" style="left:1350.8px;top:876.25px;width:91px;height:9px;background:#64e09b;border-radius:5px;"></div>
<div class="t" id="t105" style="left:1460.0px;top:872.3px;font-size:15px;line-height:15px;color:#111;font-weight:bold;letter-spacing:-1.000px;">91%</div>
<div class="a" style="left:1523px;top:876.25px;width:100px;height:9px;background:#e8e9ee;border-radius:5px;"></div>
<div class="a" style="left:1523px;top:876.25px;width:97px;height:9px;background:#64e09b;border-radius:5px;"></div>
<div class="t" id="t106" style="left:1632.2px;top:872.3px;font-size:15px;line-height:15px;color:#111;font-weight:bold;letter-spacing:0.250px;">97%</div>
<div class="a" style="left:1695.4px;top:876.25px;width:100px;height:9px;background:#e8e9ee;border-radius:5px;"></div>
<div class="a" style="left:1695.4px;top:876.25px;width:94px;height:9px;background:#64e09b;border-radius:5px;"></div>
<div class="t" id="t107" style="left:1804.6px;top:872.3px;font-size:15px;line-height:15px;color:#111;font-weight:bold;letter-spacing:1.500px;">94%</div>
<div class="a" style="left:312px;top:915px;width:1544px;height:1px;background:#e6e6ea;border-radius:0;"></div>
<div class="t" id="t108" style="left:323.2px;top:936.4px;font-size:14px;line-height:14px;color:#333;font-weight:bold;letter-spacing:0.500px;">06 Apr 2023</div>
<div class="t" id="t109" style="left:323.2px;top:958.8px;font-size:14px;line-height:14px;color:#333;font-weight:bold;letter-spacing:0.500px;">07 Apr 2023</div>
<div class="t" id="t110" style="left:437.2px;top:947.2px;font-size:14.5px;line-height:14.5px;color:#4a4a4a;font-weight:normal;letter-spacing:-0.420px;">18,788</div>
<div class="t" id="t111" style="left:667.1px;top:947.2px;font-size:14.5px;line-height:14.5px;color:#4a4a4a;font-weight:normal;letter-spacing:-0.500px;">1,005</div>
<div class="t" id="t112" style="left:899.5px;top:947.2px;font-size:14.5px;line-height:14.5px;color:#4a4a4a;font-weight:normal;letter-spacing:-0.750px;">01:35</div>
<div class="t" id="t113" style="left:1020.5px;top:936.0px;font-size:14.5px;line-height:14.5px;color:#4a4a4a;font-weight:normal;">MAT2</div>
<div class="t" id="t114" style="left:1020.5px;top:958.4px;font-size:14.5px;line-height:14.5px;color:#4a4a4a;font-weight:normal;">MAT3</div>
<div class="t" id="t115" style="left:1152.0px;top:936.0px;font-size:14.5px;line-height:14.5px;color:#4a4a4a;font-weight:normal;letter-spacing:0.200px;">100349</div>
<div class="t" id="t116" style="left:1152.0px;top:958.4px;font-size:14.5px;line-height:14.5px;color:#4a4a4a;font-weight:normal;letter-spacing:0.200px;">133452</div>
<div class="a" style="left:1350.8px;top:950.75px;width:100px;height:9px;background:#e8e9ee;border-radius:5px;"></div>
<div class="a" style="left:1350.8px;top:950.75px;width:90px;height:9px;background:#64e09b;border-radius:5px;"></div>
<div class="t" id="t117" style="left:1460.0px;top:946.8px;font-size:15px;line-height:15px;color:#111;font-weight:bold;letter-spacing:1.250px;">90%</div>
<div class="a" style="left:1523px;top:950.75px;width:100px;height:9px;background:#e8e9ee;border-radius:5px;"></div>
<div class="a" style="left:1523px;top:950.75px;width:97px;height:9px;background:#64e09b;border-radius:5px;"></div>
<div class="t" id="t118" style="left:1632.2px;top:946.8px;font-size:15px;line-height:15px;color:#111;font-weight:bold;letter-spacing:0.250px;">97%</div>
<div class="a" style="left:1695.4px;top:950.75px;width:100px;height:9px;background:#e8e9ee;border-radius:5px;"></div>
<div class="a" style="left:1695.4px;top:950.75px;width:93px;height:9px;background:#64e09b;border-radius:5px;"></div>
<div class="t" id="t119" style="left:1804.6px;top:946.8px;font-size:15px;line-height:15px;color:#111;font-weight:bold;letter-spacing:1.250px;">93%</div>
<div class="a" style="left:312px;top:994px;width:1544px;height:1px;background:#e6e6ea;border-radius:0;"></div>
<div class="t" id="t120" style="left:323.2px;top:1014.9px;font-size:14px;line-height:14px;color:#333;font-weight:bold;letter-spacing:0.500px;">05 Apr 2023</div>
<div class="t" id="t121" style="left:323.2px;top:1037.3px;font-size:14px;line-height:14px;color:#333;font-weight:bold;letter-spacing:0.500px;">06 Apr 2023</div>
<div class="t" id="t122" style="left:437.2px;top:1025.7px;font-size:14.5px;line-height:14.5px;color:#4a4a4a;font-weight:normal;letter-spacing:-0.600px;">18,779</div>
<div class="t" id="t123" style="left:667.1px;top:1025.7px;font-size:14.5px;line-height:14.5px;color:#4a4a4a;font-weight:normal;letter-spacing:-0.500px;">1,004</div>
<div class="t" id="t124" style="left:899.5px;top:1025.7px;font-size:14.5px;line-height:14.5px;color:#4a4a4a;font-weight:normal;letter-spacing:-0.750px;">01:30</div>
<div class="t" id="t125" style="left:1020.5px;top:1025.7px;font-size:14.5px;line-height:14.5px;color:#4a4a4a;font-weight:normal;">MAT2</div>
<div class="t" id="t126" style="left:1152.0px;top:1014.5px;font-size:14.5px;line-height:14.5px;color:#4a4a4a;font-weight:normal;letter-spacing:0.200px;">100349</div>
<div class="t" id="t127" style="left:1152.0px;top:1036.9px;font-size:14.5px;line-height:14.5px;color:#4a4a4a;font-weight:normal;letter-spacing:0.200px;">176406</div>
<div class="a" style="left:1350.8px;top:1029.25px;width:100px;height:9px;background:#e8e9ee;border-radius:5px;"></div>
<div class="a" style="left:1350.8px;top:1029.25px;width:90px;height:9px;background:#64e09b;border-radius:5px;"></div>
<div class="t" id="t128" style="left:1460.0px;top:1025.3px;font-size:15px;line-height:15px;color:#111;font-weight:bold;letter-spacing:1.250px;">90%</div>
<div class="a" style="left:1523px;top:1029.25px;width:100px;height:9px;background:#e8e9ee;border-radius:5px;"></div>
<div class="a" style="left:1523px;top:1029.25px;width:97px;height:9px;background:#64e09b;border-radius:5px;"></div>
<div class="t" id="t129" style="left:1632.2px;top:1025.3px;font-size:15px;line-height:15px;color:#111;font-weight:bold;letter-spacing:0.250px;">97%</div>
<div class="a" style="left:1695.4px;top:1029.25px;width:100px;height:9px;background:#e8e9ee;border-radius:5px;"></div>
<div class="a" style="left:1695.4px;top:1029.25px;width:94px;height:9px;background:#64e09b;border-radius:5px;"></div>
<div class="t" id="t130" style="left:1804.6px;top:1025.3px;font-size:15px;line-height:15px;color:#111;font-weight:bold;letter-spacing:1.500px;">94%</div>
<div class="a" style="left:312px;top:1072px;width:1544px;height:1px;background:#e6e6ea;border-radius:0;"></div>
<svg style="left:262px;top:995px" width="32" height="31" viewBox="0 0 32 31"><ellipse cx="16" cy="15.5" rx="15.7" ry="15.5" fill="#5468f0"/><polyline points="18.5,10 13.5,15.5 18.5,21" fill="none" stroke="#fff" stroke-width="2.6"/></svg>
<div class="a" style="left:1480px;top:10px;width:192px;height:288px;background:#fff;border-radius:20px;box-shadow:0 5px 14px rgba(0,0,0,.18),0 2px 5px rgba(0,0,0,.08);overflow:hidden">
<div class="a" style="left:0;top:236px;width:186px;height:47px;background:#293a92"></div>
<div class="a" style="left:186px;top:14px;width:6px;height:98px;background:#a6acf4;border-radius:3px"></div>
</div>
<div class="t" id="t131" style="left:1498.5px;top:25.2px;font-size:17px;line-height:17px;color:#7b8088;font-weight:normal;letter-spacing:0.800px;">Custom</div>
<div class="t" id="t132" style="left:1498.5px;top:71.6px;font-size:17px;line-height:17px;color:#7b8088;font-weight:normal;letter-spacing:0.125px;">Last hour</div>
<div class="t" id="t133" style="left:1498.5px;top:118.6px;font-size:17px;line-height:17px;color:#7b8088;font-weight:normal;letter-spacing:0.250px;">Today</div>
<div class="t" id="t134" style="left:1498.5px;top:166.0px;font-size:17px;line-height:17px;color:#7b8088;font-weight:normal;letter-spacing:0.250px;">Yesterday</div>
<div class="t" id="t135" style="left:1498.5px;top:213.4px;font-size:17px;line-height:17px;color:#7b8088;font-weight:normal;letter-spacing:0.100px;">Last 7 days</div>
<div class="t" id="t136" style="left:1498.5px;top:260.6px;font-size:17px;line-height:17px;color:#fff;font-weight:normal;letter-spacing:-0.091px;">Last 30 days</div>
</body></html>
